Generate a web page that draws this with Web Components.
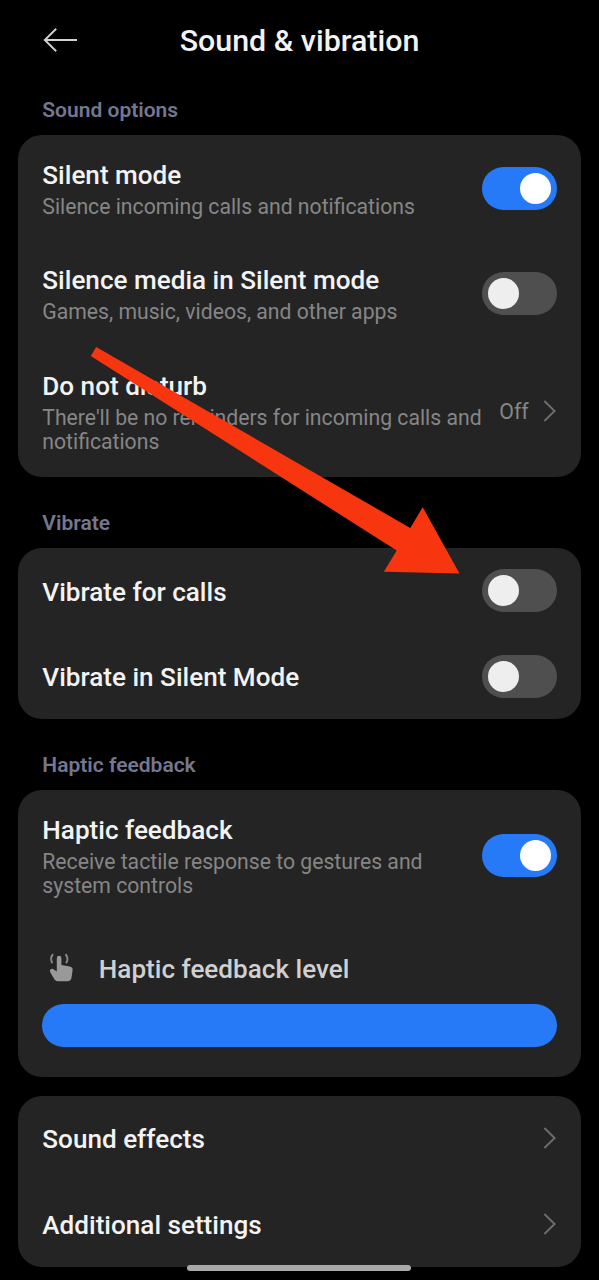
<!DOCTYPE html>
<html lang="en">
<head>
<meta charset="utf-8">
<title>Sound &amp; vibration</title>
<style>
html, body { margin: 0; background: #000; }
body { width: 599px; height: 1280px; overflow: hidden; font-family: Roboto, "Noto Sans", sans-serif; }
</style>
</head>
<body>
<settings-screen>
  <screen-header>Sound &amp; vibration</screen-header>
  <settings-group label="Sound options">
    <setting-row style="--h:105.4px">Silent mode<span slot="desc">Silence incoming calls and notifications</span><toggle-switch slot="end" on></toggle-switch></setting-row>
    <setting-row style="--h:105.4px">Silence media in Silent mode<span slot="desc">Games, music, videos, and other apps</span><toggle-switch slot="end"></toggle-switch></setting-row>
    <setting-row style="--h:130.6px">Do not disturb<span slot="desc">There'll be no reminders for incoming calls and<br>notifications</span><row-link slot="end">Off</row-link></setting-row>
  </settings-group>
  <settings-group label="Vibrate">
    <setting-row>Vibrate for calls<toggle-switch slot="end"></toggle-switch></setting-row>
    <setting-row>Vibrate in Silent Mode<toggle-switch slot="end"></toggle-switch></setting-row>
  </settings-group>
  <settings-group label="Haptic feedback">
    <setting-row style="--h:130px">Haptic feedback<span slot="desc">Receive tactile response to gestures and<br>system controls</span><toggle-switch slot="end" on></toggle-switch></setting-row>
    <level-slider>Haptic feedback level</level-slider>
  </settings-group>
  <settings-group>
    <setting-row>Sound effects<row-link slot="end"></row-link></setting-row>
    <setting-row>Additional settings<row-link slot="end"></row-link></setting-row>
  </settings-group>
  <pointer-arrow slot="overlay"></pointer-arrow>
  <home-indicator slot="overlay"></home-indicator>
</settings-screen>
<script>
const define = (name, html) => {
  const template = document.createElement('template');
  template.innerHTML = html;
  customElements.define(name, class extends HTMLElement {
    constructor() {
      super();
      this.attachShadow({ mode: 'open' }).append(template.content.cloneNode(true));
    }
    connectedCallback() {
      const label = this.shadowRoot.querySelector('[data-label]');
      if (label) {
        if (this.hasAttribute('label')) label.textContent = this.getAttribute('label');
        else label.remove();
      }
    }
  });
};

define('settings-screen', `
<style>
:host { display: block; position: relative; width: 599px; height: 1280px; overflow: hidden; background: #000; }
main { display: flex; flex-direction: column; padding: 0 18.3px; }
</style>
<main><slot></slot></main><slot name="overlay"></slot>`);

define('screen-header', `
<style>
:host { display: grid; grid-template-columns: 80px 1fr 80px; align-items: center; height: 83.3px; }
svg { display: block; margin-left: 25px; margin-top: -3px; }
h1 { margin: 0; text-align: center; font-size: 30.4px; line-height: 36px; font-weight: 500; color: #f3f3f3; white-space: nowrap; margin-top: -1px; }
</style>
<svg width="36" height="28" viewBox="0 0 36 28" fill="none" stroke="#d2d2d2" stroke-width="1.9"><path d="M34 14H2M13.2 2.8L1.8 14L13.2 25.2"/></svg>
<h1><slot></slot></h1>`);

define('settings-group', `
<style>
:host { display: block; margin-bottom: 19.2px; }
h2 { margin: 0; height: 52.2px; padding-left: 24px; font-size: 21px; line-height: 55px; font-weight: 600; color: #74778f; }
section { background: #242424; border-radius: 24px; overflow: hidden; }
</style>
<h2 data-label></h2><section><slot></slot></section>`);

define('setting-row', `
<style>
:host { display: flex; align-items: center; justify-content: space-between; height: var(--h, 85.4px); padding: 0 24px; box-sizing: border-box; }
.text { padding-top: 1.3px; white-space: nowrap; }
.title { font-size: 26.1px; line-height: 30px; font-weight: 500; color: #f3f3f3; }
.desc { display: block; font-size: 21.2px; line-height: 24.6px; color: #868686; }
::slotted([slot=desc]) { display: block; padding-top: 5px; margin-bottom: -1.5px; }
::slotted([slot=end]) { flex: none; }
</style>
<div class="text"><div class="title"><slot></slot></div><div class="desc"><slot name="desc"></slot></div></div>
<slot name="end"></slot>`);

define('toggle-switch', `
<style>
:host { display: flex; align-items: center; width: 75px; height: 43px; padding: 0 6px; box-sizing: border-box; border-radius: 22px; background: #4f4f4f; }
i { width: 31px; height: 31px; border-radius: 50%; background: #eee; }
:host([on]) { background: #277af7; justify-content: flex-end; }
:host([on]) i { background: #fff; }
</style><i></i>`);

define('row-link', `
<style>
:host { display: flex; align-items: center; gap: 14px; font-size: 21.3px; line-height: 27px; color: #868686; }
svg { display: block; margin-top: -1px; }
</style>
<slot></slot>
<svg width="14" height="22" viewBox="0 0 14 22" fill="none" stroke="#6d6d6d" stroke-width="1.9"><path d="M1.4 1L11.6 11L1.4 21"/></svg>`);

define('level-slider', `
<style>
:host { display: block; height: 156.5px; padding: 33.6px 24px 0; box-sizing: border-box; }
.head { display: flex; align-items: center; height: 30px; color: #d0d0d0; font-size: 26.1px; line-height: 30px; font-weight: 500; }
svg { display: block; margin: -2px 24.5px 0 6px; }
.bar { height: 43px; margin-top: 19.9px; border-radius: 22px; background: #277af7; }
</style>
<div class="head">
<svg width="26" height="30" viewBox="0 0 26 30"><path fill="#999" d="M8.8 5.2Q8.8 2.8 11.1 2.8Q13.4 2.8 13.4 5.2V12L21.7 13.6Q25 14.3 24.6 17.3L23.6 24.3Q23 28.3 19.5 28.3H10.2Q8.1 28.3 6.7 26.7L2.1 18.9Q1.3 17 2.9 16.1Q4.3 15.4 5.8 16.4L8.8 18.4Z"/><path d="M5 1.2Q1.4 5.6 4.4 10.1M17.5 1.2Q21.1 5.6 18.1 10.1" fill="none" stroke="#8a8a8a" stroke-width="1.9"/></svg>
<slot></slot></div><div class="bar"></div>`);

define('pointer-arrow', `
<style>
:host { position: absolute; left: 90px; top: 346px; width: 370px; height: 228px; }
svg { display: block; }
</style>
<svg width="370" height="228" viewBox="90 346 370 228"><path fill="#f7350e" d="M96.2 347L410.3 528L422.7 507.2L459.5 573.5L383.8 571.8L396.7 550.5L90.8 356Z"/></svg>`);

define('home-indicator', `
<style>
:host { position: absolute; left: 187.4px; top: 1265.4px; width: 224px; height: 6px; border-radius: 3px; background: #a8a8a8; }
</style>`);
</script>
</body>
</html>
